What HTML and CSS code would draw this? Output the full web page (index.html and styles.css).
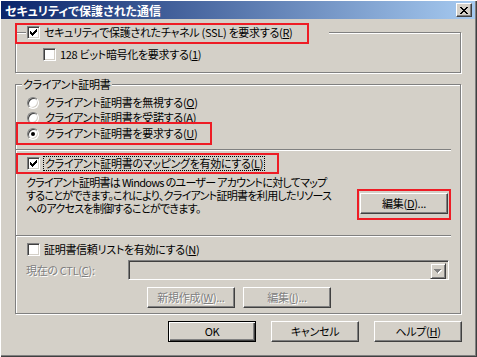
FILE: index.html
```html
<!DOCTYPE html>
<html lang="ja">

<head>
    <meta charset="utf-8">
    <title>セキュリティで保護された通信</title>
    <link rel="stylesheet" href="styles.css">
</head>

<body>
    <div class="dialog">
        <div class="titlebar">
            <span class="title">セキュリティで保護された通信</span>
            <span class="close">
                <svg width="8" height="7" viewBox="0 0 8 7" shape-rendering="crispEdges">
                    <path d="M0 0h2v1h-2z M6 0h2v1h-2z M1 1h2v1h-2z M5 1h2v1h-2z M2 2h4v1h-4z M3 3h2v1h-2z M2 4h4v1h-4z M1 5h2v1h-2z M5 5h2v1h-2z M0 6h2v1h-2z M6 6h2v1h-2z" fill="#000"/>
                </svg>
            </span>
        </div>

        <div class="client">
            <!-- SSL -->
            <div class="group group-ssl">
                <div class="legend legend-check">
                    <span class="chk on"><svg width="7" height="7" viewBox="0 0 7 7" shape-rendering="crispEdges"><path d="M0 2h1v3h-1z M1 3h1v3h-1z M2 4h1v3h-1z M3 3h1v3h-1z M4 2h1v3h-1z M5 1h1v3h-1z M6 0h1v3h-1z" fill="#000"/></svg></span>
                    <span>セキュリティで保護されたチャネル (SSL) を要求する(<u>R</u>)</span>
                </div>
                <div class="row row-sub">
                    <span class="chk"></span>
                    <span>128 ビット暗号化を要求する(<u>1</u>)</span>
                </div>
            </div>

            <!-- クライアント証明書 -->
            <div class="group group-client">
                <div class="legend legend-text">クライアント証明書</div>

                <div class="row opt opt-1"><span class="radio"></span><span>クライアント証明書を無視する(<u>O</u>)</span></div>
                <div class="row opt opt-2"><span class="radio"></span><span>クライアント証明書を受諾する(<u>A</u>)</span></div>
                <div class="row opt opt-3"><span class="radio on"></span><span>クライアント証明書を要求する(<u>U</u>)</span></div>

                <div class="sep sep-1"></div>

                <div class="row opt map-row">
                    <span class="chk on"><svg width="7" height="7" viewBox="0 0 7 7" shape-rendering="crispEdges"><path d="M0 2h1v3h-1z M1 3h1v3h-1z M2 4h1v3h-1z M3 3h1v3h-1z M4 2h1v3h-1z M5 1h1v3h-1z M6 0h1v3h-1z" fill="#000"/></svg></span>
                    <span class="focus">クライアント証明書のマッピングを有効にする(<u>L</u>)</span>
                </div>

                <div class="desc-row">
                    <p class="desc">クライアント証明書は Windows のユーザー アカウントに対してマップ<br>することができます。これにより、クライアント証明書を利用したリソース<br>へのアクセスを制御することができます。</p>
                    <div class="btn btn-edit">編集(<u>D</u>)...</div>
                </div>

                <div class="sep sep-2"></div>

                <div class="row opt ctl-row">
                    <span class="chk"></span>
                    <span>証明書信頼リストを有効にする(<u>N</u>)</span>
                </div>

                <div class="current-row">
                    <span class="disabled">現在の CTL(<u>C</u>):</span>
                    <div class="combo">
                        <span class="combo-btn">
                            <svg width="8" height="5" viewBox="0 0 8 5" shape-rendering="crispEdges">
                                <path d="M1 1h7v1h-1v1h-1v1h-1v1h-1v-1h-1v-1h-1v-1h-1z" fill="#fff"/>
                                <path d="M0 0h7v1h-1v1h-1v1h-1v1h-1v-1h-1v-1h-1v-1h-1z" fill="#808080"/>
                            </svg>
                        </span>
                    </div>
                </div>

                <div class="ctl-buttons">
                    <div class="btn disabled">新規作成(<u>W</u>)...</div>
                    <div class="btn disabled">編集(<u>I</u>)...</div>
                </div>
            </div>

            <div class="dlg-buttons">
                <div class="btn btn-default">OK</div>
                <div class="btn">キャンセル</div>
                <div class="btn">ヘルプ(<u>H</u>)</div>
            </div>
        </div>

        <!-- 赤枠 -->
        <div class="mark mark-ssl"></div>
        <div class="mark mark-require"></div>
        <div class="mark mark-map"></div>
        <div class="mark mark-edit"></div>
    </div>
</body>

</html>
```

FILE: styles.css
```css
* {
    margin: 0;
    padding: 0;
    box-sizing: border-box;
}

body {
    background-color: #d4d0c8;
    font-family: "Noto Sans CJK JP", sans-serif;
    font-size: 11px;
    letter-spacing: -0.3px;
    line-height: 13px;
    color: #000000;
    font-feature-settings: "palt" 1;
}

u {
    text-underline-offset: 1px;
}

.dialog {
    position: relative;
    width: 477px;
    height: 357px;
    background-color: #d4d0c8;
    padding: 1px 2px 0 1px;
    box-shadow: inset 1px 1px #ffffff, inset -1px -1px #404040, inset -2px -2px #808080;
}

/* title */
.titlebar {
    display: flex;
    align-items: center;
    height: 18px;
    padding-left: 4px;
    background: linear-gradient(to right, #0a246a, #a6caf0);
    color: #ffffff;
    font-size: 12px;
    font-weight: bold;
    letter-spacing: 0;
}

.close {
    display: flex;
    align-items: center;
    justify-content: center;
    width: 16px;
    height: 14px;
    margin-left: auto;
    margin-right: 3px;
    background-color: #d4d0c8;
    border: 1px solid;
    border-color: #ffffff #404040 #404040 #ffffff;
    box-shadow: inset -1px -1px #808080;
}

.client {
    padding-left: 14px;
}

/* group boxes */
.group {
    display: flex;
    flex-direction: column;
    width: 446px;
    border: 1px solid #808080;
    box-shadow: inset 1px 1px #ffffff, 1px 1px #ffffff;
}

.legend {
    display: flex;
    align-items: center;
    align-self: flex-start;
    height: 13px;
    margin-top: -7px;
    background-color: #d4d0c8;
    white-space: nowrap;
}

.legend-check {
    width: 303px;
    margin-left: 10px;
    padding-left: 1px;
    gap: 4px;
}

.legend-text {
    margin-left: 6px;
    padding: 0 2px 0 1px;
}

.group-ssl {
    margin-top: 13px;
    padding-bottom: 11px;
}

.group-client {
    margin-top: 11px;
    padding-bottom: 5px;
}

.row {
    display: flex;
    align-items: center;
    gap: 4px;
    height: 13px;
    white-space: nowrap;
}

.row-sub {
    margin-top: 9px;
    margin-left: 27px;
}

.opt {
    margin-left: 11px;
}

.opt-1 {
    margin-top: 5px;
}

.opt-2 {
    margin-top: 2px;
}

.opt-3 {
    margin-top: 3px;
}

.sep {
    width: 435px;
    height: 2px;
    border-top: 1px solid #808080;
    border-bottom: 1px solid #ffffff;
}

.sep-1 {
    margin-top: 9px;
}

.map-row {
    margin-top: 6px;
}

.focus {
    outline: 1px dotted #000000;
    outline-offset: 0;
    padding: 0 1px;
}

.desc-row {
    display: flex;
    margin-top: 6px;
}

.desc {
    margin-left: 10px;
    white-space: nowrap;
    letter-spacing: -0.7px;
}

.btn-edit {
    margin-top: 17px;
    margin-left: auto;
    margin-right: 12px;
}

.sep-2 {
    margin-top: 20px;
}

.ctl-row {
    margin-top: 6px;
}

.current-row {
    display: flex;
    align-items: center;
    margin-top: 4px;
}

.current-row .disabled {
    margin-left: 10px;
}

.combo {
    display: flex;
    justify-content: flex-end;
    width: 321px;
    height: 20px;
    margin-left: auto;
    margin-right: 11px;
    padding: 2px;
    background-color: #d4d0c8;
    border: 1px solid;
    border-color: #808080 #ffffff #ffffff #808080;
    box-shadow: inset 1px 1px #404040, inset -1px -1px #d4d0c8;
}

.combo-btn {
    display: flex;
    align-items: center;
    justify-content: center;
    width: 16px;
    height: 16px;
    border: 1px solid;
    border-color: #d4d0c8 #404040 #404040 #d4d0c8;
    box-shadow: inset 1px 1px #ffffff, inset -1px -1px #808080;
}

.ctl-buttons {
    display: flex;
    gap: 8px;
    margin-top: 7px;
    margin-left: 131px;
}

.dlg-buttons {
    display: flex;
    gap: 15px;
    margin-top: 7px;
    margin-left: 153px;
}

/* controls */
.chk {
    display: flex;
    align-items: center;
    justify-content: center;
    flex: none;
    width: 13px;
    height: 13px;
    background-color: #ffffff;
    border: 1px solid;
    border-color: #808080 #ffffff #ffffff #808080;
    box-shadow: inset 1px 1px #404040, inset -1px -1px #d4d0c8;
}

.radio {
    position: relative;
    flex: none;
    width: 12px;
    height: 12px;
    margin-right: 2px;
    border-radius: 50%;
    background-color: #ffffff;
    border: 1px solid;
    border-color: #808080 #ffffff #ffffff #808080;
    box-shadow: inset 1px 1px #404040, inset -1px -1px #d4d0c8;
}

.radio.on::after {
    content: "";
    position: absolute;
    left: 3px;
    top: 3px;
    width: 4px;
    height: 4px;
    border-radius: 50%;
    background-color: #000000;
}

.btn {
    display: flex;
    align-items: center;
    justify-content: center;
    flex: none;
    width: 88px;
    height: 21px;
    background-color: #d4d0c8;
    border: 1px solid;
    border-color: #ffffff #404040 #404040 #ffffff;
    box-shadow: inset -1px -1px #808080, inset 1px 1px #d4d0c8;
    white-space: nowrap;
}

.btn-default {
    border-color: #000000;
    box-shadow: inset 1px 1px #ffffff, inset -1px -1px #404040, inset -2px -2px #808080;
}

.disabled {
    color: #808080;
    text-shadow: 1px 1px #ffffff;
}

/* red highlight boxes */
.mark {
    position: absolute;
    border: 2px solid #ee1c25;
}

.mark-ssl {
    left: 15px;
    top: 23px;
    width: 294px;
    height: 21px;
}

.mark-require {
    left: 16px;
    top: 122px;
    width: 196px;
    height: 23px;
}

.mark-map {
    left: 16px;
    top: 153px;
    width: 263px;
    height: 21px;
}

.mark-edit {
    left: 357px;
    top: 189px;
    width: 94px;
    height: 31px;
}
```
